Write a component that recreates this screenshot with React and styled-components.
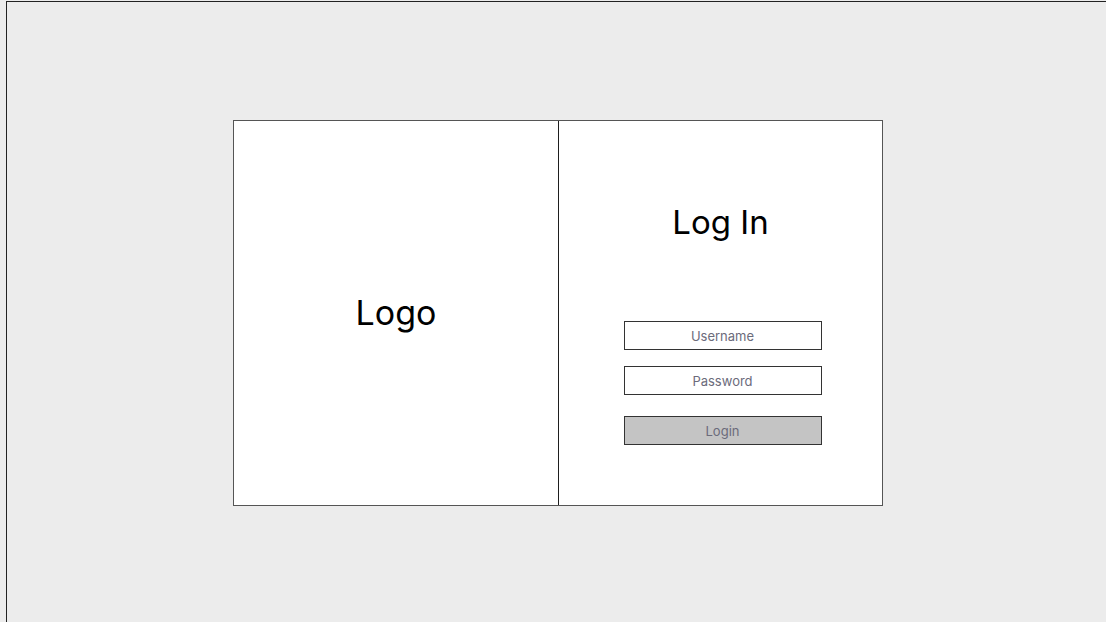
import React from 'react';
import styled, { createGlobalStyle } from 'styled-components';

const GlobalStyle = createGlobalStyle`
  html, body {
    margin: 0;
    padding: 0;
    background: #ececec;
    font-family: Inter, "Liberation Sans", sans-serif;
  }
`;

// Page frame with its top/left edge lines
const Frame = styled.div`
  box-sizing: border-box;
  margin: 1px 0 0 6px;
  height: calc(100vh - 1px);
  border-top: 1px solid #222;
  border-left: 1px solid #222;
  background: #ececec;
  display: flex;
  justify-content: center;
  align-items: center;
`;

const Card = styled.div`
  box-sizing: border-box;
  width: 650px;
  height: 386px;
  margin: 2px 0 0 3px;
  background: #fff;
  border: 1px solid #555;
  display: grid;
  grid-template-columns: 325px 1fr;
`;

const LogoPanel = styled.div`
  display: flex;
  justify-content: center;
  align-items: center;
  padding-bottom: 2px;
  border-right: 1px solid #1e1e1e;
  font-size: 34px;
  color: #000;
`;

const FormPanel = styled.div`
  display: flex;
  flex-direction: column;
  align-items: center;
  padding-top: 81px;
`;

const Title = styled.h1`
  margin: 0 0 79px;
  font-size: 33px;
  font-weight: 400;
  line-height: 40px;
  color: #000;
`;

const Field = styled.div`
  box-sizing: border-box;
  width: 198px;
  height: 29px;
  margin: 0 0 ${({ $gap }) => $gap}px 4px;
  border: 1px solid #333;
  background: ${({ $fill }) => $fill || '#fff'};
  display: flex;
  justify-content: center;
  align-items: center;
  font-size: 13px;
  color: #6b6b7b;
`;

export default function App() {
  return (
    <>
      <GlobalStyle />
      <Frame>
        <Card>
          <LogoPanel>Logo</LogoPanel>
          <FormPanel>
            <Title>Log In</Title>
            <Field $gap={16}>Username</Field>
            <Field $gap={21}>Password</Field>
            <Field $gap={0} $fill="#c4c4c4">Login</Field>
          </FormPanel>
        </Card>
      </Frame>
    </>
  );
}
